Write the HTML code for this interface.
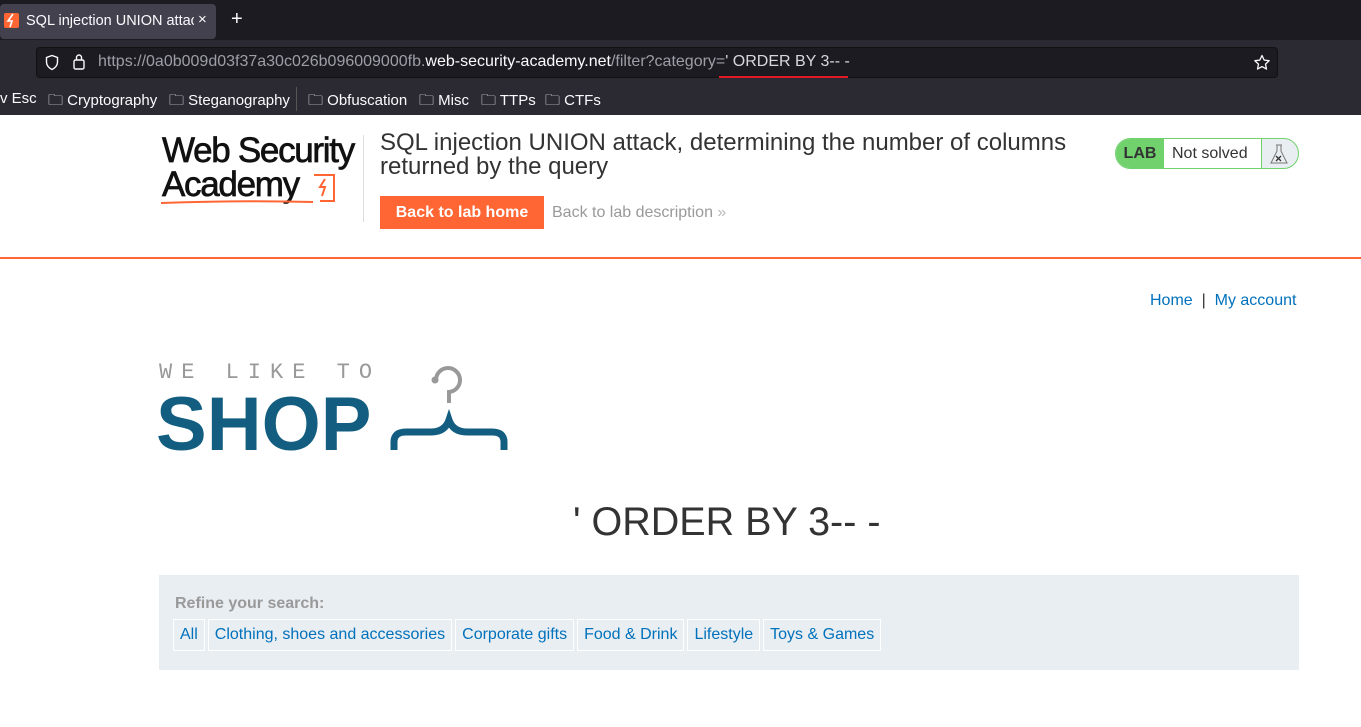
<!DOCTYPE html>
<html><head><meta charset="utf-8"><style>
*{margin:0;padding:0;box-sizing:border-box}
body{width:1361px;height:727px;overflow:hidden;background:#fff;font-family:"Liberation Sans",sans-serif;position:relative}
.abs{position:absolute}
.chrome{font-family:"Liberation Sans",sans-serif;white-space:nowrap}
a{text-decoration:none}
</style></head><body>
<div class="abs" style="left:0;top:0;width:1361px;height:40px;background:#1c1b22"></div>
<div class="abs" style="left:0;top:4px;width:216px;height:35px;background:#42414d;border-radius:4px"></div>
<div class="abs" style="left:4px;top:13px;width:15px;height:15px;background:#ff6633;border-radius:2px"><svg width="15" height="15"><path d="M9 1L4 8h4l-2 6" stroke="#fff" stroke-width="1.6" fill="none"/></svg></div>
<div class="abs chrome" style="left:26px;top:13px;font-size:14.5px;color:#fbfbfe;width:168px;overflow:hidden">SQL injection UNION attac</div>
<div class="abs chrome" style="left:198px;top:11px;font-size:15px;color:#fbfbfe">×</div>
<div class="abs chrome" style="left:231px;top:8px;font-size:20px;color:#fbfbfe">+</div>
<div class="abs" style="left:0;top:40px;width:1361px;height:75px;background:#2b2a33"></div>
<div class="abs" style="left:36px;top:47px;width:1242px;height:31px;background:#1c1b22;border:1px solid #111;border-radius:4px"></div>
<svg class="abs" style="left:44px;top:54px" width="16" height="17"><path d="M8 1.5L2.5 3.5v4.5c0 3.5 2.5 6 5.5 7.5 3-1.5 5.5-4 5.5-7.5V3.5z" fill="none" stroke="#fbfbfe" stroke-width="1.4"/></svg>
<svg class="abs" style="left:72px;top:53px" width="14" height="18"><rect x="2" y="7" width="10" height="9" rx="1.5" fill="none" stroke="#fbfbfe" stroke-width="1.4"/><path d="M4.5 7V4.5a2.5 2.5 0 0 1 5 0V7" fill="none" stroke="#fbfbfe" stroke-width="1.4"/></svg>
<div class="abs chrome" style="left:98px;top:53px;font-size:16px;color:#9e9ea6">https://0a0b009d03f37a30c026b096009000fb.<span style="color:#fbfbfe">web-security-academy.net</span>/filter?category=<span style="color:#d8d8dc">' ORDER BY 3-- -</span></div>
<div class="abs" style="left:719px;top:76px;width:129px;height:2px;background:#e01b24"></div>
<svg class="abs" style="left:1253px;top:54px" width="18" height="18"><path d="M9 1.5l2.2 4.6 5 .6-3.7 3.4 1 5-4.5-2.5-4.5 2.5 1-5L1.8 6.7l5-.6z" fill="none" stroke="#fbfbfe" stroke-width="1.3" stroke-linejoin="round"/></svg>
<div class="abs chrome" style="left:0;top:90px;font-size:15px;color:#fbfbfe">v Esc</div>
<div class="abs chrome" style="left:48px;top:90px;font-size:15px;color:#fbfbfe">🗀 Cryptography</div>
<div class="abs chrome" style="left:169px;top:90px;font-size:15px;color:#fbfbfe">🗀 Steganography</div>
<div class="abs" style="left:296px;top:87px;width:1px;height:24px;background:#555"></div>
<div class="abs chrome" style="left:308px;top:90px;font-size:15px;color:#fbfbfe">🗀 Obfuscation</div>
<div class="abs chrome" style="left:419px;top:90px;font-size:15px;color:#fbfbfe">🗀 Misc</div>
<div class="abs chrome" style="left:481px;top:90px;font-size:15px;color:#fbfbfe">🗀 TTPs</div>
<div class="abs chrome" style="left:545px;top:90px;font-size:15px;color:#fbfbfe">🗀 CTFs</div>

<div class="abs" style="left:162px;top:134px;font-size:35px;letter-spacing:-1.3px;line-height:34px;color:#111;-webkit-text-stroke:0.7px #111">Web Security<br>Academy</div>
<svg class="abs" style="left:160px;top:172px" width="185" height="35"><path d="M154 3h20v26h-14" fill="none" stroke="#ff6633" stroke-width="2"/><path d="M165 7l-5 8h5l-3 9" fill="none" stroke="#ff6633" stroke-width="2"/><path d="M1 31q80 -3 152 -1" stroke="#ff6633" stroke-width="2" fill="none"/></svg>
<div class="abs" style="left:363px;top:135px;width:1px;height:87px;background:#ddd"></div>
<div class="abs" style="left:380px;top:131px;font-size:24px;line-height:24px;color:#333;width:720px">SQL injection UNION attack, determining the number of columns returned by the query</div>
<div class="abs" style="left:380px;top:196px;width:164px;height:33px;background:#ff6633;color:#fff;font-weight:bold;font-size:16px;text-align:center;line-height:33px">Back to lab home</div>
<div class="abs" style="left:552px;top:204px;font-size:16px;color:#999">Back to lab description <span style="color:#bbb">»</span></div>
<div class="abs" style="left:1115px;top:138px;width:184px;height:31px;border:1px solid #70d16d;border-radius:16px;overflow:hidden;background:#e9eef2">
<div class="abs" style="left:0;top:0;width:48px;height:31px;background:#70d16d;font-weight:bold;font-size:16px;color:#333;line-height:29px;text-align:center">LAB</div>
<div class="abs" style="left:48px;top:0;width:98px;height:29px;background:#fff;border-right:1px solid #70d16d;font-size:16px;color:#333;line-height:29px;padding-left:8px">Not solved</div>
<svg class="abs" style="left:153px;top:4px" width="20" height="22"><path d="M7 2h6M8 2v6l-6 12h16l-6-12V2" fill="none" stroke="#777" stroke-width="1"/><path d="M7 13l5 5M12 13l-5 5" stroke="#333" stroke-width="1.3"/></svg>
</div>
<div class="abs" style="left:0;top:257px;width:1361px;height:2px;background:#ff6633"></div>

<div class="abs" style="left:1150px;top:292px;font-size:16px;color:#0071bc">Home <span style="color:#333">&nbsp;|&nbsp;</span> My account</div>
<div class="abs" style="left:159px;top:360px;font-family:'Liberation Mono',monospace;font-size:22px;letter-spacing:9px;color:#999">WE LIKE TO</div>
<div class="abs" style="left:156px;top:381px;font-size:76px;font-weight:bold;color:#135e80;letter-spacing:0">SHOP</div>
<svg class="abs" style="left:390px;top:362px" width="122" height="90"><circle cx="45" cy="18" r="3.5" fill="#999"/><path d="M46 18a12 12 0 1 1 13 12v11" fill="none" stroke="#999" stroke-width="4"/><path d="M4 88v-8q0-10 12-10h25q14 0 18-12 4 12 18 12h25q12 0 12 10v8" fill="none" stroke="#135e80" stroke-width="7"/></svg>
<div class="abs" style="left:573px;top:500px;font-size:39.5px;color:#333;white-space:nowrap">' ORDER BY 3-- -</div>
<div class="abs" style="left:159px;top:575px;width:1140px;height:95px;background:#e9eef2">
<div class="abs" style="left:16px;top:20px;font-size:16px;font-weight:bold;color:#999">Refine your search:</div>
<div class="abs" style="left:14px;top:44px;display:flex;gap:3px;font-size:16px">
<span style="border:1px solid #fff;padding:6px 6px;color:#0071bc">All</span>
<span style="border:1px solid #fff;padding:6px 6px;color:#0071bc">Clothing, shoes and accessories</span>
<span style="border:1px solid #fff;padding:6px 6px;color:#0071bc">Corporate gifts</span>
<span style="border:1px solid #fff;padding:6px 6px;color:#0071bc">Food &amp; Drink</span>
<span style="border:1px solid #fff;padding:6px 6px;color:#0071bc">Lifestyle</span>
<span style="border:1px solid #fff;padding:6px 6px;color:#0071bc">Toys &amp; Games</span>
</div></div>
</body></html>
